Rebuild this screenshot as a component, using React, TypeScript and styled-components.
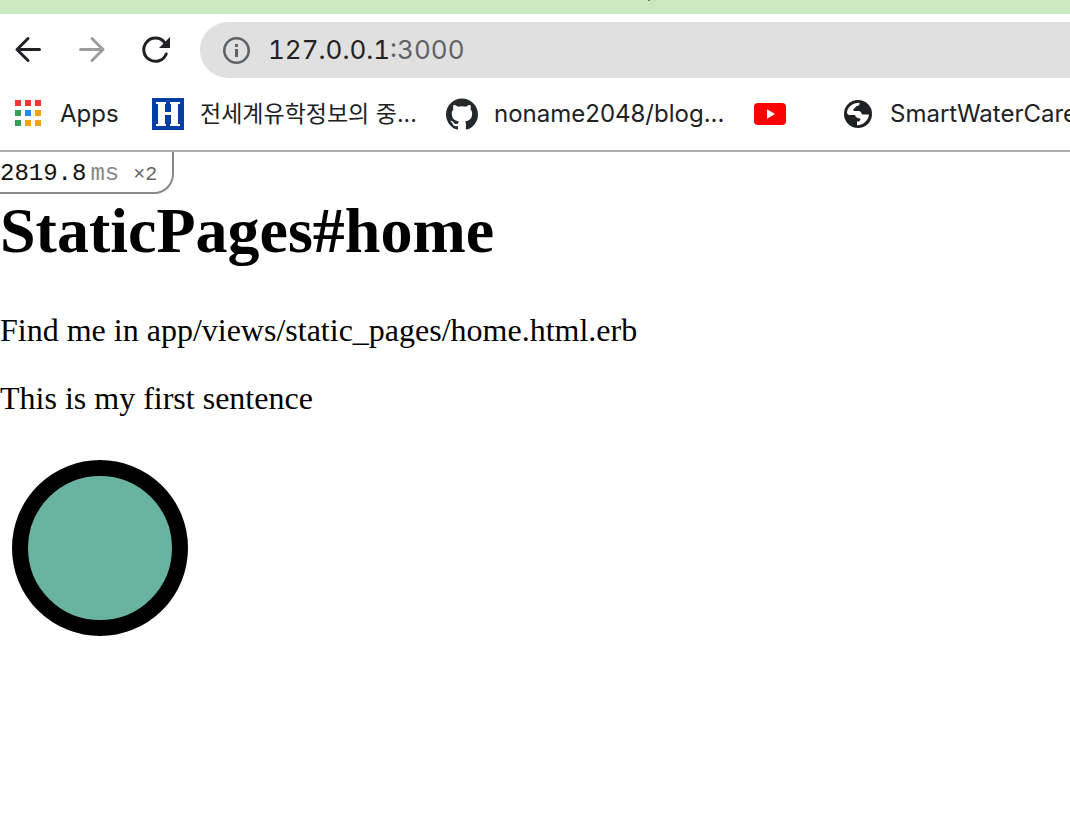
import React from "react";
import styled, { createGlobalStyle } from "styled-components";
import { SiGithub } from "react-icons/si";

const GlobalStyle = createGlobalStyle`
  *, *::before, *::after { box-sizing: border-box; }
  html, body { margin: 0; background: #fff; }
  body { overflow-x: hidden; }
`;

const Browser = styled.div`
  min-height: 100vh;
  background: #fff;
  color: #202124;
  font-family: Inter, "Noto Sans CJK KR", sans-serif;
`;

const TabStrip = styled.div`
  height: 14px;
  background: #cae9be;
`;

const TabMark = styled.div`
  width: 2px;
  height: 1px;
  margin-left: 648px;
  background: #6b7b66;
`;

const Toolbar = styled.div`
  display: flex;
  align-items: center;
  padding: 8px 0 0 12px;
`;

const NavButton = styled.button`
  display: flex;
  flex: none;
  width: 32px;
  height: 32px;
  margin-right: 32px;
  padding: 0;
  border: 0;
  background: none;
  color: #202124;

  &:disabled { color: #9d9d9d; }
  &:last-of-type { margin-right: 28px; }
`;

const AddressBar = styled.div`
  display: flex;
  flex: 1;
  align-items: center;
  gap: 16px;
  height: 56px;
  padding-left: 20px;
  border-radius: 28px 0 0 28px;
  background: #e0e0e0;
`;

const Address = styled.div`
  font-size: 26px;
  font-variant-numeric: tabular-nums;
  line-height: 32px;
`;

const Port = styled.span`
  color: #5f6368;
`;

const Bookmarks = styled.nav`
  display: flex;
  align-items: center;
  height: 74px;
  padding-left: 12px;
  border-bottom: 2px solid #b0b0b0;
  overflow: hidden;
`;

const Bookmark = styled.a<{ $iconOnly?: boolean }>`
  display: flex;
  flex: none;
  align-items: center;
  gap: 16px;
  height: 32px;
  margin-right: ${({ $iconOnly }) => ($iconOnly ? 56 : 34)}px;
  color: #202124;
  text-decoration: none;
  white-space: nowrap;
`;

const Label = styled.span<{ $width?: number; $size?: number }>`
  width: ${({ $width }) => ($width ? `${$width}px` : "auto")};
  font-size: ${({ $size = 24 }) => $size}px;
  line-height: 32px;
`;

const Page = styled.main`
  position: relative;
  padding-top: 43px;
  color: #000;
  font-family: "Liberation Serif", serif;
`;

const Profiler = styled.div`
  position: absolute;
  top: 0;
  left: 0;
  display: flex;
  align-items: baseline;
  width: 174px;
  height: 42px;
  border: solid #888;
  border-width: 0 2px 2px 0;
  border-radius: 0 0 20px 0;
  color: #111;
  font: 24px/44px "Liberation Mono", monospace;
`;

const Unit = styled.span`
  margin: 0 14px 0 4px;
  color: #888;
`;

const Count = styled.span`
  color: #666;
  font-size: 20px;
`;

const Title = styled.h1`
  margin: 0 0 45px;
  font-size: 64px;
  line-height: 72px;
`;

const Paragraph = styled.p`
  margin: 0 0 32px;
  font-size: 32px;
  line-height: 36px;
`;

const Drawing = styled.svg`
  display: block;
`;

const appColors = ["#f43535", "#f43535", "#f43535", "#34a05b", "#2288f6", "#f0a30a", "#34a05b", "#f0a30a", "#f0a30a"];

const AppsIcon = () => (
  <svg width="32" height="32" viewBox="0 0 32 32">
    {appColors.map((fill, i) => (
      <rect key={i} x={3 + (i % 3) * 10} y={2 + Math.floor(i / 3) * 10} width="6" height="6" fill={fill} />
    ))}
  </svg>
);

const Arrow = ({ forward = false }: { forward?: boolean }) => (
  <svg width="32" height="32" viewBox="0 0 32 32" fill="none" stroke="currentColor" strokeWidth="3" strokeLinecap="round" strokeLinejoin="round">
    <path d={forward ? "M4.5 15.5H27M16 4.5L27 15.5L16 26.5" : "M27.5 15.5H5M16 4.5L5 15.5L16 26.5"} />
  </svg>
);

const Reload = () => (
  <svg width="32" height="32" viewBox="0 0 32 32">
    <path d="M26.2 20A11.6 11.6 0 1 1 24.5 8.5" fill="none" stroke="currentColor" strokeWidth="3" strokeLinecap="round" />
    <path d="M30 3V14H19Z" fill="currentColor" />
  </svg>
);

const Info = () => (
  <svg width="32" height="32" viewBox="0 0 32 32" fill="#5f6368">
    <circle cx="16.5" cy="16.5" r="12.2" fill="none" stroke="#5f6368" strokeWidth="2.6" />
    <path d="M15 10h3v3h-3zM15 15h3v8h-3z" />
  </svg>
);

const HIcon = () => (
  <svg width="32" height="32" viewBox="0 0 32 32">
    <path d="M0 0H32V32H0Z" fill="#003da5" />
    <path d="M4 4H14V6H13V14H19V6H18V4H28V6H26V26H28V28H18V26H19V17H13V26H14V28H4V26H6V6H4Z" fill="#fff" />
  </svg>
);

const YouTube = () => (
  <svg width="32" height="32" viewBox="0 0 32 32">
    <rect y="5" width="32" height="22" rx="4" fill="#f00" />
    <path d="M13 11.3L21 16L13 20.7Z" fill="#fff" />
  </svg>
);

const Globe = () => (
  <svg width="32" height="32" viewBox="0 0 32 32">
    <circle cx="16" cy="16" r="14" fill="#202124" />
    <path d="M5 14C6 8.5 11 4.5 17.5 4.7C18 7 16.5 8 14 8.3C13.5 10 12 10.5 11.500 11V13H17C19 13.5 19.5 15.5 20 16.5H27C26.5 22 22 27 15 27.3V23.5C17 23.5 18.5 23 18.5 20.5C15 20.5 13.5 19 13 17H7C5.5 16.5 5 15.5 5 14Z" fill="#fff" />
  </svg>
);

export default function App() {
  return (
    <Browser>
      <GlobalStyle />
      <TabStrip><TabMark /></TabStrip>
      <Toolbar>
        <NavButton aria-label="Back"><Arrow /></NavButton>
        <NavButton aria-label="Forward" disabled><Arrow forward /></NavButton>
        <NavButton aria-label="Reload"><Reload /></NavButton>
        <AddressBar>
          <Info />
          <Address>127.0.0.1<Port>:3000</Port></Address>
        </AddressBar>
      </Toolbar>
      <Bookmarks aria-label="Bookmarks">
        <Bookmark href="#apps"><AppsIcon /><Label $width={58}>Apps</Label></Bookmark>
        <Bookmark href="#study"><HIcon /><Label $width={212} $size={23}>전세계유학정보의 중...</Label></Bookmark>
        <Bookmark href="#blog"><SiGithub size={32} color="#24292e" /><Label $width={226}>noname2048/blog...</Label></Bookmark>
        <Bookmark href="#youtube" aria-label="YouTube" $iconOnly><YouTube /></Bookmark>
        <Bookmark href="#water"><Globe /><Label>SmartWaterCare</Label></Bookmark>
      </Bookmarks>
      <Page>
        <Profiler>2819.8<Unit>ms</Unit><Count>×2</Count></Profiler>
        <Title>StaticPages#home</Title>
        <Paragraph>Find me in app/views/static_pages/home.html.erb</Paragraph>
        <Paragraph>This is my first sentence</Paragraph>
        <Drawing width="200" height="200">
          <circle cx="100" cy="100" r="80" fill="#69b3a2" stroke="#000" strokeWidth="16" />
        </Drawing>
      </Page>
    </Browser>
  );
}
